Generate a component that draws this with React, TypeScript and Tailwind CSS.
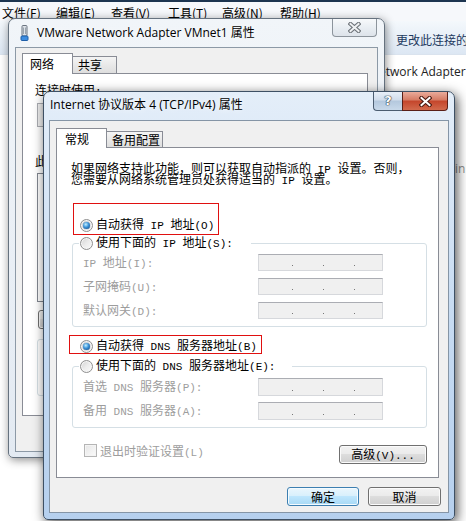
import type { ReactNode } from "react";

const MENU = [
  { label: "文件(F)", w: "w-[54px]" },
  { label: "编辑(E)", w: "w-[55px]" },
  { label: "查看(V)", w: "w-[57px]" },
  { label: "工具(T)", w: "w-[54px]" },
  { label: "高级(N)", w: "w-[58px]" },
  { label: "帮助(H)", w: "w-[58px]" },
];

// SimSun-style text: ASCII runs get a narrow monospace face
function Sim({ t }: { t: string }) {
  return (
    <>
      {t.split(/([ -~]+)/).map((p, i) =>
        i % 2 === 1 ? (
          <span key={i} className="font-['Liberation_Mono',monospace] text-[11px]">
            {p}
          </span>
        ) : (
          p
        ),
      )}
    </>
  );
}

function Radio({ checked }: { checked?: boolean }) {
  return (
    <span className="flex h-[13px] w-[13px] shrink-0 items-center justify-center rounded-full border border-[#8f8f8f] bg-gradient-to-br from-[#d2d2d2] via-[#ececec] to-[#fbfbfb] shadow-[inset_0_0_0_1px_#f6f6f6]">
      {checked && (
        <span className="h-[7px] w-[7px] rounded-full bg-[radial-gradient(circle_at_40%_35%,#c4f0ff_0%,#3a92d8_45%,#0f3f78_100%)] shadow-[0_0_1px_#0c3360]" />
      )}
    </span>
  );
}

function IpBox({ h }: { h: string }) {
  return (
    <div
      className={`flex w-[125px] shrink-0 items-end border border-[#d6d8dc] border-t-[#abadb3] bg-[#f0f0f0] pb-[4px] ${h}`}
    >
      <span className="ml-[33px] h-px w-px bg-[#777]" />
      <span className="ml-[30px] h-px w-px bg-[#777]" />
      <span className="ml-[30px] h-px w-px bg-[#777]" />
    </div>
  );
}

function Btn({
  children,
  w,
  primary,
}: {
  children?: ReactNode;
  w: string;
  primary?: boolean;
}) {
  return (
    <div
      className={`flex h-[19px] items-center justify-center rounded-[3px] border leading-none ${w} ${
        primary
          ? "border-[#3c7fb1] bg-[linear-gradient(#eaf6fd,#d9f0fc_45%,#bee6fd_50%,#a7d9f5)] shadow-[inset_0_0_0_1px_#f4fbff]"
          : "border-[#707070] bg-[linear-gradient(#f2f2f2,#ebebeb_45%,#dddddd_50%,#cfcfcf)] shadow-[inset_0_0_0_1px_#fbfbfb]"
      }`}
    >
      {children}
    </div>
  );
}

function CloseX({ outline, fill }: { outline: string; fill: string }) {
  return (
    <svg width="13" height="11" viewBox="0 0 13 11">
      <path d="M2.5 2 L10.5 9 M10.5 2 L2.5 9" stroke={outline} strokeWidth="4.2" strokeLinecap="square" />
      <path d="M2.5 2 L10.5 9 M10.5 2 L2.5 9" stroke={fill} strokeWidth="2" strokeLinecap="square" />
    </svg>
  );
}

function AdapterIcon() {
  return (
    <svg width="9" height="16" viewBox="0 0 9 16" className="shrink-0">
      <rect x="2" y="0.5" width="5" height="10.5" rx="1" fill="#dde2e8" stroke="#6b7480" />
      <path d="M3.5 2.5 V9 M5.5 2.5 V9" stroke="#9aa4ae" />
      <rect x="1" y="11" width="7" height="4.5" rx="1" fill="#3d8de0" stroke="#1d5ea8" />
    </svg>
  );
}

function BackWindow() {
  return (
    <div className="absolute left-[8px] top-[18px] flex h-[440px] w-[377px] flex-col rounded-t-[7px] rounded-b-[5px] border border-[#66727f] bg-gradient-to-b from-[#f1f5f9] to-[#e3eaf2] shadow-[1px_2px_10px_rgba(0,0,0,0.45)]">
      <div className="flex h-[28px] shrink-0 items-start">
        <div className="flex items-center self-center pl-[11px] pb-[1px]">
          <AdapterIcon />
          <span className="ml-[8px] whitespace-nowrap font-['Open_Sans','Noto_Sans_CJK_SC',sans-serif] leading-none [text-shadow:0_0_6px_#fff]">
            VMware Network Adapter VMnet1 属性
          </span>
        </div>
        <div className="ml-auto mr-[7px] flex h-[18px] w-[45px] items-center justify-center rounded-b-[4px] border border-t-0 border-[#8c949c] bg-[linear-gradient(#f7f9fb,#e9eef3_50%,#dde3ea)]">
          <CloseX outline="#6c7278" fill="#eef0f2" />
        </div>
      </div>
      <div className="ml-[6px] flex h-[405px] w-[363px] flex-col border border-[#8c99a6] bg-[#f0f0f0] pl-[6px] pt-[5px]">
        <div className="flex items-end">
          <div className="relative z-10 -mb-px flex h-[21px] w-[51px] items-center border border-b-0 border-[#898c95] bg-white pl-[7px]">
            网络
          </div>
          <div className="flex h-[17px] w-[44px] items-center border border-b-0 border-l-0 border-[#898c95] bg-gradient-to-b from-[#f4f4f4] to-[#dedede] pl-[5px]">
            共享
          </div>
        </div>
        <div className="flex h-[343px] w-[346px] flex-col border border-[#898c95] bg-white px-[12px]">
          <div className="mt-[9px] h-[14px] leading-[14px]">
            <Sim t="连接时使用:" />
          </div>
          <div className="ml-[2px] mt-[6px] h-[24px] w-[316px] border border-[#abadb3] bg-[#f0f0f0]" />
          <div className="mt-[28px] h-[12px] leading-[12px]">
            <Sim t="此连接使用下列项目(O):" />
          </div>
          <div className="ml-[2px] mt-[6px] h-[129px] w-[316px] border border-[#828790] bg-white" />
          <div className="ml-[3px] mt-[8px] flex gap-[6px]">
            <Btn w="w-[75px]" />
            <Btn w="w-[75px]" />
          </div>
          <div className="ml-[2px] mt-[10px] h-[57px] w-[316px] rounded-[3px] border border-[#d5dfe5]" />
        </div>
      </div>
    </div>
  );
}

function FrontWindow() {
  return (
    <div className="absolute left-[43px] top-[91px] flex h-[429px] w-[412px] flex-col rounded-t-[7px] rounded-b-[5px] border border-[#3e5064] bg-gradient-to-b from-[#e4eef9] via-[#c8dcf2] to-[#b6d0ee] shadow-[2px_3px_12px_rgba(0,0,0,0.7)]">
      <div className="flex h-[28px] shrink-0 items-start">
        <span className="self-center whitespace-nowrap pb-[2px] pl-[6px] font-['Open_Sans','Noto_Sans_CJK_SC',sans-serif] leading-none [text-shadow:0_0_6px_#fff]">
          Internet 协议版本 4 (TCP/IPv4) 属性
        </span>
        <div className="ml-auto mr-[6px] flex">
          <div className="flex h-[19px] w-[29px] items-center justify-center rounded-bl-[4px] border border-t-0 border-r-0 border-[#4c5d70] bg-[linear-gradient(#e8eff8,#d0dcea_45%,#b4c8dd_50%,#c8d9ea)] pb-[1px] font-['DejaVu_Sans',sans-serif] text-[13px] font-bold leading-none text-white [text-shadow:0_0_1px_#1f2d3d,0_0_1px_#1f2d3d,0_0_1px_#1f2d3d]">
            ?
          </div>
          <div className="flex h-[19px] w-[46px] items-center justify-center rounded-br-[4px] border border-t-0 border-[#5a1f17] bg-[linear-gradient(#eaab9b,#d57a63_45%,#c4452b_50%,#d26a4d)]">
            <CloseX outline="#4a1a12" fill="#ffffff" />
          </div>
        </div>
      </div>
      <div className="ml-[5px] flex h-[393px] w-[400px] flex-col border border-[#8595a6] bg-[#f0f0f0] pl-[6px] pt-[7px]">
        <div className="flex items-end">
          <div className="relative z-10 -mb-px flex h-[20px] w-[51px] items-center border border-b-0 border-[#898c95] bg-white pl-[8px] leading-none">
            常规
          </div>
          <div className="flex h-[16px] w-[56px] items-center border border-b-0 border-l-0 border-[#898c95] bg-gradient-to-b from-[#f4f4f4] to-[#dedede] pl-[5px] leading-none">
            备用配置
          </div>
        </div>
        <div className="relative flex h-[331px] w-[383px] flex-col border border-[#898c95] bg-white">
          <div className="ml-[14px] mt-[14px] whitespace-nowrap">
            <div className="h-[11px] leading-[11px]">
              <Sim t="如果网络支持此功能，则可以获取自动指派的 IP 设置。否则，" />
            </div>
            <div className="h-[11px] leading-[11px]">
              <Sim t="您需要从网络系统管理员处获得适当的 IP 设置。" />
            </div>
          </div>

          <div className="ml-[23px] mt-[33px] flex h-[16px] items-center gap-[3px] leading-none">
            <Radio checked />
            <span className="whitespace-nowrap">
              <Sim t="自动获得 IP 地址(O)" />
            </span>
          </div>

          <fieldset className="ml-[15px] mt-[2px] w-[355px] rounded-[3px] border border-[#d5dfe5] pb-[7px]">
            <legend className="ml-[6px] w-[172px] pl-[1px]">
              <div className="flex h-[16px] items-center gap-[3px] leading-none">
                <Radio />
                <span className="whitespace-nowrap">
                  <Sim t="使用下面的 IP 地址(S):" />
                </span>
              </div>
            </legend>
            <div className="mt-[3px] flex flex-col gap-[7px] text-[#9d9d9d]">
              {["IP 地址(I):", "子网掩码(U):", "默认网关(D):"].map((l) => (
                <div key={l} className="flex items-center leading-none">
                  <span className="ml-[10px] w-[175px] whitespace-nowrap">
                    <Sim t={l} />
                  </span>
                  <IpBox h="h-[17px]" />
                </div>
              ))}
            </div>
          </fieldset>

          <div className="ml-[23px] mt-[11px] flex h-[16px] items-center gap-[3px] leading-none">
            <Radio checked />
            <span className="whitespace-nowrap">
              <Sim t="自动获得 DNS 服务器地址(B)" />
            </span>
          </div>

          <fieldset className="ml-[15px] mt-[4px] w-[355px] rounded-[3px] border border-[#d5dfe5] pb-[7px]">
            <legend className="ml-[6px] w-[213px] pl-[1px]">
              <div className="flex h-[16px] items-center gap-[3px] leading-none">
                <Radio />
                <span className="whitespace-nowrap">
                  <Sim t="使用下面的 DNS 服务器地址(E):" />
                </span>
              </div>
            </legend>
            <div className="mt-[4px] flex flex-col gap-[6px] text-[#9d9d9d]">
              {["首选 DNS 服务器(P):", "备用 DNS 服务器(A):"].map((l) => (
                <div key={l} className="flex items-center leading-none">
                  <span className="ml-[10px] w-[175px] whitespace-nowrap">
                    <Sim t={l} />
                  </span>
                  <IpBox h="h-[18px]" />
                </div>
              ))}
            </div>
          </fieldset>

          <div className="mt-[16px] flex items-start">
            <span className="ml-[27px] h-[13px] w-[13px] border border-[#b5b5b5] bg-gradient-to-br from-[#e6e6e6] to-[#fbfbfb] shadow-[inset_0_0_0_1px_#f4f4f4]" />
            <span className="ml-[3px] whitespace-nowrap leading-[13px] text-[#9d9d9d]">
              <Sim t="退出时验证设置(L)" />
            </span>
            <div className="ml-auto mr-[11px] mt-[1px]">
              <Btn w="w-[88px]">
                <span className="whitespace-nowrap">
                  <Sim t="高级(V)..." />
                </span>
              </Btn>
            </div>
          </div>

          {/* red annotation frames */}
          <div className="pointer-events-none absolute left-[16px] top-[55px] h-[32px] w-[146px] border border-[#e01010]" />
          <div className="pointer-events-none absolute left-[12px] top-[187px] h-[19px] w-[193px] border border-[#e01010]" />
        </div>

        <div className="mt-[9px] flex justify-end gap-[9px] pr-[7px]">
          <Btn w="w-[72px]" primary>
            确定
          </Btn>
          <Btn w="w-[73px]">取消</Btn>
        </div>
      </div>
    </div>
  );
}

export default function App() {
  return (
    <div className="relative h-[521px] w-[466px] overflow-hidden bg-white font-['Noto_Sans_CJK_SC',sans-serif] text-[12px] text-black">
      {/* explorer window underneath */}
      <div className="flex h-full flex-col">
        <div className="h-[2px] shrink-0 bg-[#1d3550]" />
        <div className="flex h-[19px] shrink-0 items-center bg-[#f6f8fb] pl-[2px] pt-[3px] leading-none">
          {MENU.map((m) => (
            <span key={m.label} className={`${m.w} shrink-0 whitespace-nowrap`}>
              {m.label}
            </span>
          ))}
        </div>
        <div className="flex h-[34px] shrink-0 items-center whitespace-nowrap border-b border-[#dae3ee] bg-gradient-to-b from-[#f4f8fc] to-[#dce7f3] pl-[396px] pt-[4px] leading-none text-[#1e3a5f]">
          更改此连接的设置
        </div>
        <div className="flex-1 font-['Open_Sans',sans-serif]">
          <div className="whitespace-nowrap pl-[370px] pt-[9px] leading-[16px] text-[#222]">
            Network Adapter
          </div>
          <div className="whitespace-nowrap pl-[452px] pt-[81px] leading-[16px] text-[#8c8c8c]">
            link
          </div>
        </div>
      </div>

      <BackWindow />
      <FrontWindow />
    </div>
  );
}
